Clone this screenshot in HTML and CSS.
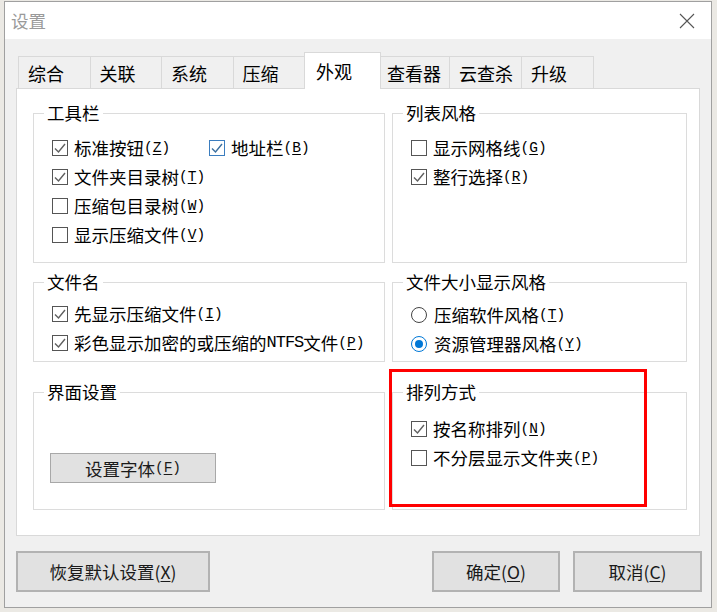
FILE: index.html
```html
<!DOCTYPE html>
<html lang="zh-CN">
<head>
    <meta charset="UTF-8">
    <title>设置</title>
    <link rel="stylesheet" href="styles.css">
</head>
<body>
    <div class="window">
        <div class="titlebar">
            <span class="title">设置</span>
            <svg class="close" width="16" height="16" viewBox="0 0 16 16">
                <path d="M1 1 L15 15 M15 1 L1 15" stroke="#555" stroke-width="1.1" fill="none"/>
            </svg>
        </div>

        <div class="content">
            <div class="tabs">
                <div class="tab">综合</div>
                <div class="tab">关联</div>
                <div class="tab">系统</div>
                <div class="tab">压缩</div>
                <div class="tab active">外观</div>
                <div class="tab tab-long">查看器</div>
                <div class="tab tab-long">云查杀</div>
                <div class="tab">升级</div>
            </div>

            <div class="panel">
                <div class="groups">
                    <fieldset class="grp">
                        <legend>工具栏</legend>
                        <div class="opt-row">
                            <label class="opt opt-wide"><span class="box"><svg viewBox="0 0 14 14"><polyline points="2,7.5 5.5,11 12,3"/></svg></span>标准按钮<span class="key">(<u>Z</u>)</span></label>
                            <label class="opt"><span class="box box-hot"><svg viewBox="0 0 14 14"><polyline points="2,7.5 5.5,11 12,3"/></svg></span>地址栏<span class="key">(<u>B</u>)</span></label>
                        </div>
                        <label class="opt"><span class="box"><svg viewBox="0 0 14 14"><polyline points="2,7.5 5.5,11 12,3"/></svg></span>文件夹目录树<span class="key">(<u>T</u>)</span></label>
                        <label class="opt"><span class="box"></span>压缩包目录树<span class="key">(<u>W</u>)</span></label>
                        <label class="opt"><span class="box"></span>显示压缩文件<span class="key">(<u>V</u>)</span></label>
                    </fieldset>

                    <fieldset class="grp">
                        <legend>列表风格</legend>
                        <label class="opt"><span class="box"></span>显示网格线<span class="key">(<u>G</u>)</span></label>
                        <label class="opt"><span class="box"><svg viewBox="0 0 14 14"><polyline points="2,7.5 5.5,11 12,3"/></svg></span>整行选择<span class="key">(<u>R</u>)</span></label>
                    </fieldset>

                    <fieldset class="grp grp-tight">
                        <legend>文件名</legend>
                        <label class="opt"><span class="box"><svg viewBox="0 0 14 14"><polyline points="2,7.5 5.5,11 12,3"/></svg></span>先显示压缩文件<span class="key">(<u>I</u>)</span></label>
                        <label class="opt"><span class="box"><svg viewBox="0 0 14 14"><polyline points="2,7.5 5.5,11 12,3"/></svg></span>彩色显示加密的或压缩的<span class="key key-caps">NTFS</span>文件<span class="key">(<u>P</u>)</span></label>
                    </fieldset>

                    <fieldset class="grp grp-tight grp-radio">
                        <legend>文件大小显示风格</legend>
                        <label class="opt"><span class="radio"></span>压缩软件风格<span class="key">(<u>T</u>)</span></label>
                        <label class="opt"><span class="radio radio-on"></span>资源管理器风格<span class="key">(<u>Y</u>)</span></label>
                    </fieldset>

                    <fieldset class="grp grp-loose grp-low">
                        <legend>界面设置</legend>
                        <button class="btn btn-font">设置字体<span class="key">(<u>F</u>)</span></button>
                    </fieldset>

                    <fieldset class="grp grp-loose grp-low">
                        <legend>排列方式</legend>
                        <label class="opt"><span class="box"><svg viewBox="0 0 14 14"><polyline points="2,7.5 5.5,11 12,3"/></svg></span>按名称排列<span class="key">(<u>N</u>)</span></label>
                        <label class="opt"><span class="box"></span>不分层显示文件夹<span class="key">(<u>P</u>)</span></label>
                    </fieldset>
                </div>

                <!-- 标注框 -->
                <div class="mark"></div>
            </div>

            <div class="footer">
                <button class="btn btn-reset">恢复默认设置(<u>X</u>)</button>
                <button class="btn btn-ok">确定(<u>O</u>)</button>
                <button class="btn btn-cancel">取消(<u>C</u>)</button>
            </div>
        </div>
    </div>
</body>
</html>
```

FILE: styles.css
```css
body {
    margin: 0;
    background: #ebe9e4;
    font-family: "Noto Sans CJK SC", "Microsoft YaHei", sans-serif;
    font-size: 17.5px;
    color: #000;
}
.window {
    margin: 1px 0 0 4px;
    width: 708px;
    height: 607px;
    box-sizing: border-box;
    border: 1px solid #a0a0a0;
    background: #f0f0f0;
}
.titlebar {
    height: 37px;
    background: #fff;
    display: flex;
    align-items: center;
    justify-content: space-between;
    padding: 0 16px 0 6px;
}
.title {
    color: #9a9a9a;
    line-height: 20px;
}
.close {
    display: block;
}
.content {
    padding: 13px 11px 0 11px;
}
.tabs {
    display: flex;
    align-items: flex-end;
    padding-left: 2px;
    height: 36px;
}
.tab {
    width: 72.5px;
    height: 32px;
    box-sizing: border-box;
    border: 1px solid #d9d9d9;
    border-bottom: none;
    margin-left: -1px;
    padding-left: 9px;
    display: flex;
    align-items: center;
    font-size: 18px;
    color: #000;
}
.tab:first-child {
    margin-left: 0;
}
.tab-long {
    width: auto;
    padding: 0 8px 0 6px;
}
.tab-long + .tab-long {
    padding-left: 9px;
}
.tab.active {
    width: 77px;
    height: 37px;
    margin: 0 0 -1px -1px;
    padding-left: 11px;
    background: #fff;
    position: relative;
    z-index: 1;
}
.panel {
    position: relative;
    height: 448px;
    box-sizing: border-box;
    border: 1px solid #d9d9d9;
    background: #fff;
    padding: 14px 12px 0 16px;
}
.groups {
    display: grid;
    grid-template-columns: 352px 295px;
    grid-template-rows: 160px 90px 139px;
    column-gap: 7px;
    row-gap: 9px;
}
.grp {
    margin: 0;
    min-width: 0;
    box-sizing: border-box;
    border: 1px solid #dcdcdc;
    padding: 10px 8px 0 18px;
}
.grp legend {
    line-height: 20px;
    padding: 0 3px;
    margin-left: -8px;
}
.grp-tight {
    padding-top: 7px;
}
.grp-radio {
    padding-top: 8px;
}
.grp-loose {
    padding-top: 12px;
}
.grp-low {
    margin-top: 11px;
}
.opt-row {
    display: flex;
}
.opt {
    height: 29px;
    display: flex;
    align-items: center;
    white-space: nowrap;
}
.opt-wide {
    width: 157px;
}
.box {
    width: 16px;
    height: 16px;
    box-sizing: border-box;
    border: 1px solid #555;
    margin-right: 6px;
    flex: none;
    background: #fff;
}
.box svg {
    display: block;
    width: 14px;
    height: 14px;
    fill: none;
    stroke: #606060;
    stroke-width: 1.4;
}
.box-hot {
    border-color: #3b7dbf;
}
.box-hot svg {
    stroke: #3b6f9f;
}
.radio {
    width: 16px;
    height: 16px;
    box-sizing: border-box;
    border: 1px solid #444;
    border-radius: 50%;
    margin-right: 7px;
    flex: none;
    display: flex;
    align-items: center;
    justify-content: center;
}
.radio-on {
    border-color: #0078d7;
}
.radio-on::after {
    content: "";
    width: 8px;
    height: 8px;
    border-radius: 50%;
    background: #0078d7;
}
.key {
    font-family: "Liberation Mono", monospace;
    font-size: 14.5px;
}
.key-caps {
    font-size: 17px;
    letter-spacing: -1px;
}
u {
    text-underline-offset: 2px;
}
.btn {
    font-family: inherit;
    font-size: 17.5px;
    color: #1a1a1a;
    background: #e1e1e1;
    border: 2px solid #b2b2b2;
    box-sizing: border-box;
    padding: 0;
    cursor: pointer;
}
.btn-font {
    width: 166px;
    height: 30px;
    margin: 39px 0 0 -2px;
    border-width: 1px;
    border-color: #a8a8a8;
    display: flex;
    align-items: center;
    justify-content: center;
}
.mark {
    position: absolute;
    left: 372px;
    top: 280px;
    width: 258px;
    height: 138px;
    box-sizing: border-box;
    border: 3px solid #ff0000;
}
.footer {
    display: flex;
    margin: 15px -2px 0 0;
}
.btn-reset {
    width: 194px;
    height: 41px;
}
.btn-ok {
    width: 128px;
    height: 41px;
    margin-left: auto;
}
.btn-cancel {
    width: 129px;
    height: 41px;
    margin-left: 13px;
}
```
